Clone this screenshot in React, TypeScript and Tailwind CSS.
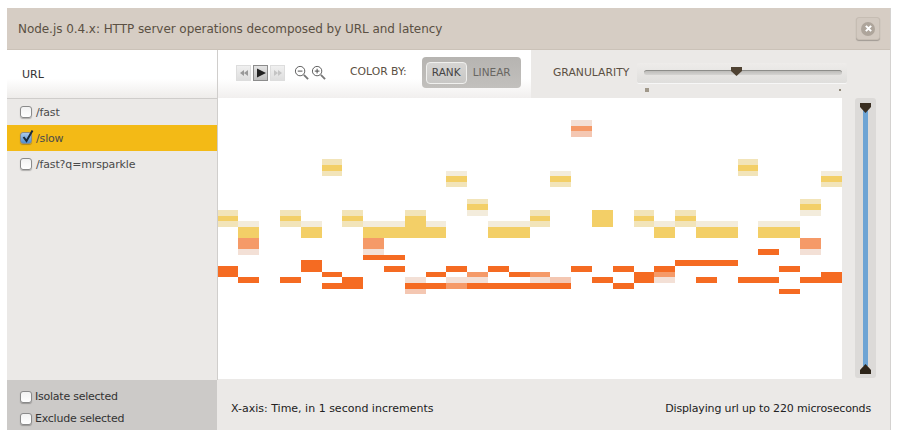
const VL = "#f3ecdc", A = "#f2e4b9", Y = "#f3cf67", O = "#f56b22", S = "#f59a68", L = "#f3e0d6", P = "#f4c7b2";

// [column, first row, row count, colour]
const CELLS: [number, number, number, string][] = [
  [17, 4, 1, L], [17, 5, 1, S], [17, 6, 1, P],
  [5, 11, 1, A], [5, 12, 1, Y], [5, 13, 1, A],
  [25, 11, 1, A], [25, 12, 1, Y], [25, 13, 1, A],
  [11, 13, 1, VL], [11, 14, 1, Y], [11, 15, 1, A],
  [16, 13, 1, VL], [16, 14, 1, Y], [16, 15, 1, A],
  [29, 13, 1, VL], [29, 14, 1, Y], [29, 15, 1, A],
  [12, 18, 1, A], [12, 19, 1, Y], [12, 20, 1, VL],
  [28, 18, 1, A], [28, 19, 1, Y], [28, 20, 1, VL],
  [0, 20, 1, A], [0, 21, 1, Y], [0, 22, 1, A],
  [3, 20, 1, A], [3, 21, 1, Y], [3, 22, 1, A],
  [6, 20, 1, A], [6, 21, 1, Y], [6, 22, 1, A],
  [15, 20, 1, A], [15, 21, 1, Y], [15, 22, 1, A],
  [20, 20, 1, A], [20, 21, 1, Y], [20, 22, 1, A],
  [22, 20, 1, A], [22, 21, 1, Y], [22, 22, 1, A],
  [9, 20, 1, A], [9, 21, 4, Y],
  [18, 20, 3, Y],
  [1, 22, 1, VL], [1, 23, 2, Y], [4, 22, 1, VL], [4, 23, 2, Y],
  [7, 22, 1, VL], [7, 23, 2, Y], [8, 22, 1, VL], [8, 23, 2, Y],
  [10, 22, 1, VL], [10, 23, 2, Y], [13, 22, 1, VL], [13, 23, 2, Y],
  [14, 22, 1, VL], [14, 23, 2, Y], [21, 22, 1, VL], [21, 23, 2, Y],
  [23, 22, 1, VL], [23, 23, 2, Y], [24, 22, 1, VL], [24, 23, 2, Y],
  [26, 22, 1, VL], [26, 23, 2, Y], [27, 22, 1, VL], [27, 23, 2, Y],
  [1, 25, 2, S], [1, 27, 1, L], [7, 25, 2, S], [7, 27, 1, L], [28, 25, 2, S], [28, 27, 1, L],
  [7, 28, 1, O], [8, 28, 1, O], [26, 27, 1, O],
  [4, 29, 2, O], [22, 29, 1, O], [23, 29, 1, O], [24, 29, 1, O],
  [0, 30, 2, O], [8, 30, 1, O], [11, 30, 1, O], [13, 30, 1, O], [17, 30, 1, O], [19, 30, 1, O], [21, 30, 1, O], [27, 30, 1, O],
  [5, 31, 1, O], [10, 31, 1, O], [12, 31, 1, S], [14, 31, 1, O], [15, 31, 1, S], [20, 31, 2, O], [21, 31, 1, S], [29, 31, 2, O],
  [1, 32, 1, O], [3, 32, 1, O], [6, 32, 2, O], [9, 32, 1, L], [11, 32, 1, L], [12, 32, 1, L], [15, 32, 1, L], [16, 32, 1, P],
  [18, 32, 1, O], [21, 32, 1, L], [23, 32, 1, O], [25, 32, 1, O], [26, 32, 1, O], [28, 32, 1, O],
  [5, 33, 1, O], [9, 33, 1, O], [10, 33, 1, O], [11, 33, 1, S], [12, 33, 1, O], [13, 33, 1, O], [14, 33, 1, O], [15, 33, 1, O], [16, 33, 1, O], [19, 33, 1, O],
  [9, 34, 1, P], [27, 34, 1, O],
];

const colX = (c: number) => Math.floor(c * 20.8);
const rowY = (r: number) => Math.floor(r * 5.62 + 0.001);

function Check({ checked = false }: { checked?: boolean }) {
  return (
    <span className={`relative block h-[12px] w-[12px] shrink-0 rounded-[3px] border border-[#8a8a8a] shadow-[0_1px_1px_rgba(0,0,0,0.25)] ${checked ? "bg-gradient-to-b from-[#a9c8ea] to-[#4f8fd0]" : "bg-gradient-to-b from-[#f2f2f2] to-[#ffffff]"}`}>
      {checked && (
        <svg viewBox="0 0 14 15" className="absolute left-[0px] top-[-4px] h-[15px] w-[14px]">
          <path d="M2.5 8 L5.5 12 L11.5 1.5" fill="none" stroke="#1a2a3a" strokeWidth="2" />
        </svg>
      )}
    </span>
  );
}

function Row({ label, checked = false }: { label: string; checked?: boolean }) {
  return (
    <div className={`flex h-[26px] items-center gap-[4px] pl-[13px] text-[11px] tracking-[-0.15px] text-[#4a4a4a] ${checked ? "bg-[#f3ba16]" : ""}`}>
      <Check checked={checked} />
      <span className="pt-[2px]">{label}</span>
    </div>
  );
}

function Magnifier({ plus }: { plus?: boolean }) {
  return (
    <svg viewBox="0 0 16 16" className="h-[15px] w-[15px]">
      <circle cx="6.5" cy="6.5" r="5" fill="#fff" stroke="#555" strokeWidth="1" />
      <path d="M10.5 10.5 L15 15" stroke="#777" strokeWidth="2" />
      <path d="M4 6.5 H9" stroke="#444" strokeWidth="1" />
      {plus && <path d="M6.5 4 V9" stroke="#444" strokeWidth="1" />}
    </svg>
  );
}

function MediaButton({ kind }: { kind: "back" | "play" | "forward" }) {
  const active = kind === "play";
  return (
    <span className={`flex h-[16px] w-[15px] items-center justify-center border ${active ? "border-[#8c8c8c] bg-gradient-to-b from-[#e4e4e4] to-[#c0c0c0]" : "border-[#dddddd] bg-gradient-to-b from-[#f0f0f0] to-[#dedede]"}`}>
      <svg viewBox="0 0 12 10" className="h-[10px] w-[12px]">
        {kind === "play" && <path d="M2 0.5 L11 5 L2 9.5 Z" fill="#222" />}
        {kind === "back" && <path d="M6 2 L2 5 L6 8 Z M10 2 L6 5 L10 8 Z" fill="#999" />}
        {kind === "forward" && <path d="M2 2 L6 5 L2 8 Z M6 2 L10 5 L6 8 Z" fill="#c4c4c4" />}
      </svg>
    </span>
  );
}

export default function App() {
  return (
    <div className="h-[438px] w-[900px] bg-white pl-[7px] pt-[8px] [font-family:'DejaVu_Sans','Noto_Sans',sans-serif]">
      <div className="w-[884px] border-r border-[#d4d2d0]">
        <header className="flex h-[42px] items-center justify-between border-b border-[#cbc2b8] bg-[#d6cdc4] pl-[11px] pr-[10px]">
          <h1 className="text-[12px] font-normal tracking-[-0.05px] text-[#5b5043]">
            Node.js 0.4.x: HTTP server operations decomposed by URL and latency
          </h1>
          <button className="flex h-[23px] w-[24px] items-center justify-center rounded-[3px] border border-[#c6bdb3] bg-[#d2c9c0] shadow-[0_1px_1px_rgba(0,0,0,0.25)]">
            <span className="flex h-[14px] w-[14px] items-center justify-center rounded-full bg-[#aea59b]">
              <svg viewBox="0 0 8 8" className="h-[7px] w-[7px]">
                <path d="M1 1 L7 7 M7 1 L1 7" stroke="#fff" strokeWidth="2.4" />
              </svg>
            </span>
          </button>
        </header>

        <div className="flex h-[330px]">
          <aside className="flex w-[211px] shrink-0 flex-col border-r border-[#d0cecc]">
            <div className="flex h-[49px] items-center border-b border-[#cfcdcb] bg-gradient-to-b from-white from-60% to-[#eeecea] pl-[15px] pt-[2px] text-[11px] text-[#333]">
              URL
            </div>
            <div className="flex-1 bg-[#ebe9e7]">
              <Row label="/fast" />
              <Row label="/slow" checked />
              <Row label="/fast?q=mrsparkle" />
            </div>
          </aside>

          <main className="flex min-w-0 flex-1 flex-col">
            <div className="flex h-[48px]">
              <div className="flex w-[313px] items-center bg-gradient-to-b from-white from-60% to-[#f1efee] pb-[3px] pl-[18px]">
                <div className="flex items-center gap-[2px]">
                  <MediaButton kind="back" />
                  <MediaButton kind="play" />
                  <MediaButton kind="forward" />
                </div>
                <div className="ml-[9px] flex items-center gap-[2px]">
                  <Magnifier />
                  <Magnifier plus />
                </div>
                <span className="ml-[24px] text-[10.8px] text-[#5b5043]">COLOR BY:</span>
                <div className="ml-[15px] flex h-[31px] w-[99px] items-center rounded-[4px] bg-gradient-to-b from-[#b6b4b1] to-[#c2c0bd] pl-[4px]">
                  <span className="flex h-[22px] w-[41px] items-center justify-center rounded-[4px] border border-[#f0f0ee] bg-gradient-to-b from-[#d6d5d3] to-[#c8c7c5] text-[10.5px] text-[#444]">RANK</span>
                  <span className="ml-[6px] text-[10.5px] text-[#686662]">LINEAR</span>
                </div>
              </div>
              <div className="flex flex-1 items-start bg-[#ebe9e7] pl-[22px] pr-[43px] pt-[13px]">
                <span className="mt-[2px] w-[84px] shrink-0 text-[10.8px] text-[#5b5043]">GRANULARITY</span>
                <div className="flex-1">
                  <div className="relative h-[20px] rounded-[2px] bg-gradient-to-b from-[#eeecea] to-[#dfdedc] shadow-[0_1px_0_#f7f7f7]">
                    <div className="absolute left-[7px] right-[5px] top-[7px] h-[5px] rounded-full border-t border-[#8d8d8a] bg-gradient-to-b from-[#bdbcb9] to-[#d5d4d2]" />
                    <svg viewBox="0 0 11 9" className="absolute left-[94px] top-[4px] h-[9px] w-[11px]">
                      <path d="M0 0 H11 V4 L5.5 9 L0 4 Z" fill="#4f4232" />
                    </svg>
                  </div>
                  <div className="flex items-center justify-between pl-[8px] pr-[6px] pt-[5px]">
                    <span className="h-[4px] w-[4px] bg-[#a0988a]" />
                    <span className="h-[2px] w-[2px] bg-[#8f8778]" />
                  </div>
                </div>
              </div>
            </div>

            <div className="flex flex-1 bg-[#ebe9e7]">
              <svg viewBox="0 0 624 281" width="624" height="281" shapeRendering="crispEdges" className="block shrink-0 bg-white">
                {CELLS.map(([c, r, n, fill], i) => (
                  <rect key={i} x={colX(c)} y={rowY(r)} width={colX(c + 1) - colX(c)} height={rowY(r + n) - rowY(r)} fill={fill} />
                ))}
              </svg>
              <div className="flex flex-1 justify-center pb-[2px] pr-[1px]">
                <div className="relative flex w-[21px] justify-center rounded-[3px] bg-[#dcdad8]">
                  <div className="my-[12px] w-[5px] bg-[#6ea4d4]" />
                  <svg viewBox="0 0 11 10" className="absolute left-[5px] top-[5px] h-[10px] w-[11px]">
                    <path d="M0 0 H11 V4 L5.5 10 L0 4 Z" fill="#3a2f22" />
                  </svg>
                  <svg viewBox="0 0 11 10" className="absolute bottom-[4px] left-[5px] h-[10px] w-[11px]">
                    <path d="M0 10 H11 V6 L5.5 0 L0 6 Z" fill="#2e251a" />
                  </svg>
                </div>
              </div>
            </div>
          </main>
        </div>

        <footer className="flex h-[50px]">
          <div className="flex w-[210px] shrink-0 flex-col gap-[5px] bg-[#cccac8] pl-[13px] pt-[9px]">
            <label className="flex items-center gap-[3px] text-[11px] tracking-[-0.24px] text-[#333]">
              <Check /> Isolate selected
            </label>
            <label className="flex items-center gap-[3px] text-[11px] tracking-[-0.24px] text-[#333]">
              <Check /> Exclude selected
            </label>
          </div>
          <div className="flex flex-1 items-center justify-between bg-[#ebe9e7] pb-[0px] pl-[14px] pr-[19px] pt-[9px] text-[11px] text-[#222]">
            <span>X-axis: Time, in 1 second increments</span>
            <span className="tracking-[-0.15px]">Displaying url up to 220 microseconds</span>
          </div>
        </footer>
      </div>
    </div>
  );
}
